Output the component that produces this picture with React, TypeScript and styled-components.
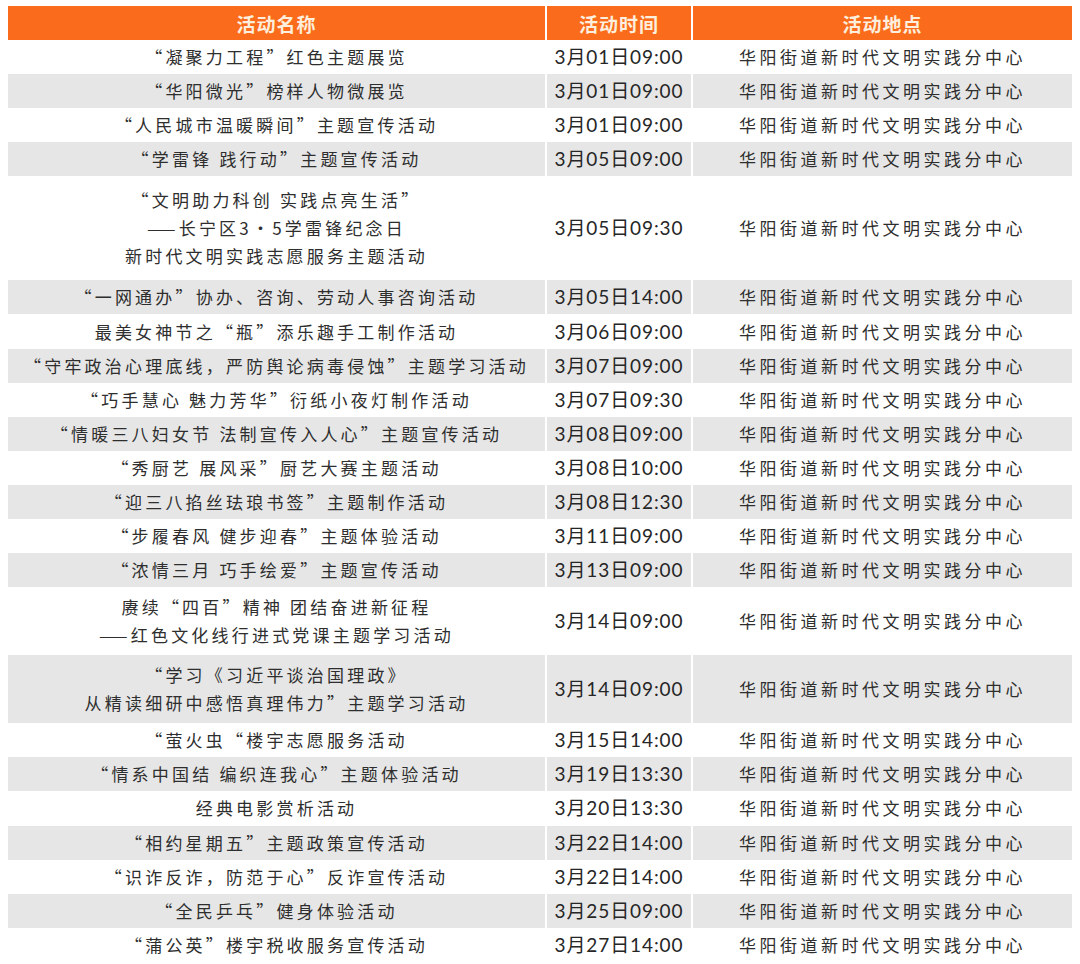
import React from 'react';
import styled, { createGlobalStyle } from 'styled-components';

const GlobalStyle = createGlobalStyle`
  body {
    margin: 0;
    background: #ffffff;
    font-family: "Noto Sans CJK SC", "Noto Sans", sans-serif;
  }
`;

const Page = styled.div`
  width: 1080px;
  height: 964px;
  padding: 6px 8px 0 8px;
  box-sizing: border-box;
  background: #ffffff;
`;

const Table = styled.div`
  display: grid;
  grid-template-columns: 537px 144px 1fr;
  column-gap: 2px;
  width: 1064px;
`;

const HeadCell = styled.div`
  height: 34px;
  background: #fa6c1b;
  color: #fdeedd;
  font-size: 19px;
  font-weight: 700;
  letter-spacing: 1px;
  display: flex;
  align-items: center;
  justify-content: center;
`;

const Cell = styled.div<{ $shaded: boolean; $height: number }>`
  height: ${p => p.$height}px;
  background: ${p => (p.$shaded ? '#e6e6e6' : '#ffffff')};
  color: #2e2e2e;
  display: flex;
  flex-direction: column;
  align-items: center;
  justify-content: center;
  text-align: center;
  font-size: 17px;
  line-height: 28px;
  white-space: nowrap;
`;

const NameLine = styled.span`
  letter-spacing: 3.2px;
`;

const TimeText = styled.span`
  font-family: Lato, "Noto Sans CJK SC", sans-serif;
  font-size: 19px;
  font-weight: 400;
  letter-spacing: 0.9px;
  color: #262626;
`;

const PlaceText = styled.span`
  letter-spacing: 3.5px;
`;

interface Activity {
  name: string[];
  time: string;
}

const PLACE = '华阳街道新时代文明实践分中心';

const activities: Activity[] = [
  { name: ['“凝聚力工程”红色主题展览'], time: '3月01日09:00' },
  { name: ['“华阳微光”榜样人物微展览'], time: '3月01日09:00' },
  { name: ['“人民城市温暖瞬间”主题宣传活动'], time: '3月01日09:00' },
  { name: ['“学雷锋 践行动”主题宣传活动'], time: '3月05日09:00' },
  {
    name: ['“文明助力科创 实践点亮生活”', '——长宁区3•5学雷锋纪念日', '新时代文明实践志愿服务主题活动'],
    time: '3月05日09:30',
  },
  { name: ['“一网通办”协办、咨询、劳动人事咨询活动'], time: '3月05日14:00' },
  { name: ['最美女神节之“瓶”添乐趣手工制作活动'], time: '3月06日09:00' },
  { name: ['“守牢政治心理底线，严防舆论病毒侵蚀”主题学习活动'], time: '3月07日09:00' },
  { name: ['“巧手慧心 魅力芳华”衍纸小夜灯制作活动'], time: '3月07日09:30' },
  { name: ['“情暖三八妇女节 法制宣传入人心”主题宣传活动'], time: '3月08日09:00' },
  { name: ['“秀厨艺 展风采”厨艺大赛主题活动'], time: '3月08日10:00' },
  { name: ['“迎三八掐丝珐琅书签”主题制作活动'], time: '3月08日12:30' },
  { name: ['“步履春风 健步迎春”主题体验活动'], time: '3月11日09:00' },
  { name: ['“浓情三月 巧手绘爱”主题宣传活动'], time: '3月13日09:00' },
  { name: ['赓续“四百”精神 团结奋进新征程', '——红色文化线行进式党课主题学习活动'], time: '3月14日09:00' },
  { name: ['“学习《习近平谈治国理政》', '从精读细研中感悟真理伟力”主题学习活动'], time: '3月14日09:00' },
  { name: ['“萤火虫“楼宇志愿服务活动'], time: '3月15日14:00' },
  { name: ['“情系中国结 编织连我心”主题体验活动'], time: '3月19日13:30' },
  { name: ['经典电影赏析活动'], time: '3月20日13:30' },
  { name: ['“相约星期五”主题政策宣传活动'], time: '3月22日14:00' },
  { name: ['“识诈反诈，防范于心”反诈宣传活动'], time: '3月22日14:00' },
  { name: ['“全民乒乓”健身体验活动'], time: '3月25日09:00' },
  { name: ['“蒲公英”楼宇税收服务宣传活动'], time: '3月27日14:00' },
];

const rowHeight = (lines: number) => (lines === 1 ? 34.1 : lines === 2 ? 68 : 104);

export default function App() {
  return (
    <>
      <GlobalStyle />
      <Page>
        <Table>
          <HeadCell>活动名称</HeadCell>
          <HeadCell>活动时间</HeadCell>
          <HeadCell>活动地点</HeadCell>
          {activities.map((a, i) => {
            const shaded = i % 2 === 1;
            const h = rowHeight(a.name.length);
            return (
              <React.Fragment key={i}>
                <Cell $shaded={shaded} $height={h}>
                  {a.name.map((line, j) => (
                    <NameLine key={j}>{line}</NameLine>
                  ))}
                </Cell>
                <Cell $shaded={shaded} $height={h}>
                  <TimeText>{a.time}</TimeText>
                </Cell>
                <Cell $shaded={shaded} $height={h}>
                  <PlaceText>{PLACE}</PlaceText>
                </Cell>
              </React.Fragment>
            );
          })}
        </Table>
      </Page>
    </>
  );
}
